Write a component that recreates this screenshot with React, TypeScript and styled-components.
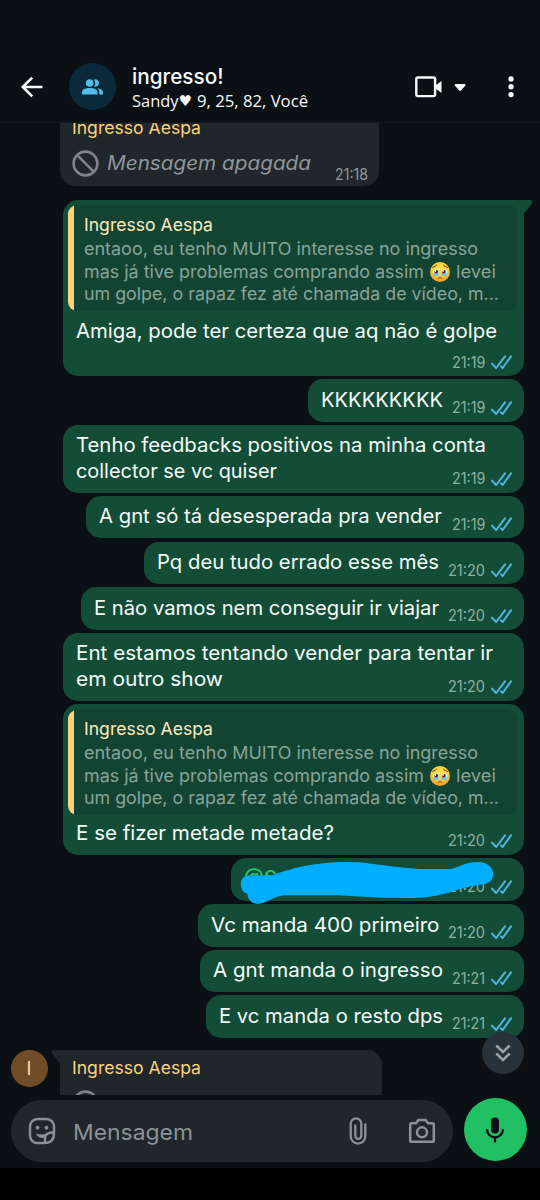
import React, { useLayoutEffect, useRef } from 'react';
import styled, { createGlobalStyle, css } from 'styled-components';

const Global = createGlobalStyle`
  * { box-sizing: border-box; }
  body {
    margin: 0;
    background: #000;
    font-family: Inter, "Open Sans", sans-serif;
    -webkit-font-smoothing: antialiased;
  }
  svg { display: block; flex: none; }
`;

const Screen = styled.div`
  width: 540px;
  height: 1200px;
  display: flex;
  flex-direction: column;
  background: #0b1014;
  overflow: hidden;
`;

const Header = styled.header`
  height: 123px;
  flex: none;
  padding: 51px 26px 0 20px;
  border-bottom: 1px solid #12181c;
  display: flex;
  align-items: center;
`;

const GroupAvatar = styled.div`
  width: 47px;
  height: 47px;
  margin-left: 25px;
  border-radius: 50%;
  background: #0a2a3b;
  display: flex;
  align-items: center;
  justify-content: center;
`;

const Titles = styled.div`
  margin: 1px auto 0 16px;
  color: #f7f8fa;
  white-space: nowrap;
`;

const Title = styled.div`
  font-size: 21px;
  font-weight: 500;
  line-height: 27px;
`;

const Subtitle = styled.div`
  display: flex;
  font-family: "Open Sans", sans-serif;
  font-size: 15.5px;
  line-height: 22px;
`;

const Heart = styled.span`
  font-family: "DejaVu Sans", sans-serif;
  width: 18px;
  font-size: 15px;
`;

const HeaderActions = styled.div`
  display: flex;
  align-items: center;
`;

const Chat = styled.main`
  height: 972px;
  flex: none;
  overflow: hidden;
  padding: 0.3px 16px 0 60px;
  display: flex;
  flex-direction: column;
  align-items: flex-end;
  gap: 3.25px;
  position: relative;
`;

const Bubble = styled.div<{ $w: number; $h: number }>`
  position: relative;
  flex: none;
  width: ${p => p.$w}px;
  height: ${p => p.$h}px;
  border-radius: 15px;
  background: #144d37;
  display: flex;
  flex-direction: column;
`;

const TailBubble = styled(Bubble)`
  margin-top: 10.4px;
  border-top-right-radius: 0;
`;

const Incoming = styled(Bubble)<{ $offset: number }>`
  align-self: flex-start;
  margin-top: ${p => p.$offset}px;
  padding: 6px 11px 0 12px;
  background: #1f272a;
  border-top-left-radius: 0;
`;

const SenderAvatar = styled.div`
  position: absolute;
  left: -49.5px;
  top: 0;
  width: 37px;
  height: 37px;
  border-radius: 50%;
  background: #704d27;
  color: #ffe0a6;
  font-size: 18px;
  display: flex;
  align-items: center;
  justify-content: center;
`;

const Tail = styled.svg<{ $side: 'left' | 'right' }>`
  position: absolute;
  top: 0;
  ${p => (p.$side === 'left' ? css`left: -9px;` : css`right: -9px; transform: scaleX(-1);`)}
`;

const Sender = styled.div`
  font-size: 17.5px;
  line-height: 24px;
  color: #fbd27c;
  white-space: nowrap;
`;

const Deleted = styled.div`
  display: flex;
  align-items: center;
  height: 27px;
  margin-top: 10px;
  color: #8f9699;
  font-size: 20px;
  font-style: italic;
  white-space: nowrap;
  gap: 8px;
`;

const DeletedTime = styled.span`
  margin: 23px 0 0 auto;
  font-size: 15.5px;
  font-style: normal;
`;

const Quote = styled.div`
  flex: none;
  margin: 5.5px 5.7px 0 5px;
  height: 105.5px;
  padding: 8.6px 0 0 16px;
  border-radius: 9px;
  background: linear-gradient(90deg, #fdd279 6px, #134333 6px);
  color: #87a599;
  font-size: 17.8px;
  line-height: 22.6px;
  white-space: nowrap;
`;

const QuoteName = styled.div`
  color: #f9ecb9;
  line-height: 22px;
  margin-bottom: 1.9px;
`;

const QuoteLine = styled.div`
  display: flex;
  align-items: center;
  gap: 6px;
  height: 22.6px;
`;

const Content = styled.div<{ $top?: number }>`
  flex: 1;
  min-height: 0;
  display: flex;
  padding: ${p => p.$top ?? 7.4}px 12px 5.6px 13px;
`;

const Body = styled.div`
  flex: 1;
  min-width: 0;
  color: #f5faf7;
  font-size: 20.3px;
  line-height: 26px;
  white-space: nowrap;
`;

const Mention = styled.span`
  color: #24c45f;
  font-weight: 500;
`;

const Meta = styled.div`
  align-self: flex-end;
  display: flex;
  align-items: center;
  gap: 6px;
  color: #8db1a1;
  font-size: 15.5px;
  line-height: 16px;
`;

const Scribble = styled.svg`
  position: absolute;
  left: 9px;
  top: 3.6px;
`;

const ScrollDown = styled.div`
  position: absolute;
  right: 16px;
  bottom: 21px;
  width: 42px;
  height: 42px;
  border-radius: 50%;
  background: #27323a;
  display: flex;
  align-items: center;
  justify-content: center;
`;

const Composer = styled.footer`
  height: 73px;
  flex: none;
  padding: 5px 13px 6px 11px;
  display: flex;
  align-items: center;
  gap: 11px;
`;

const Field = styled.div`
  flex: 1;
  height: 61.5px;
  border-radius: 31px;
  background: #1f272a;
  color: #8a9295;
  padding: 0 17px;
  display: flex;
  align-items: center;
`;

const Placeholder = styled.div`
  flex: 1;
  margin: 1px 0 0 17px;
  font-size: 22px;
  white-space: nowrap;
`;

const MicButton = styled.div`
  width: 63.5px;
  height: 63.5px;
  border-radius: 50%;
  background: #21c063;
  margin-top: -3px;
  display: flex;
  align-items: center;
  justify-content: center;
`;

const NavBar = styled.div`
  flex: 1;
  background: #000;
`;

const Run = styled.span`
  display: inline-block;
  transform-origin: 0 50%;
`;

/** One line of text, its letters widened so that it spans the given width. */
function Line({ w, children }: { w: number; children: string }) {
  const ref = useRef<HTMLSpanElement>(null);
  useLayoutEffect(() => {
    const el = ref.current!;
    el.style.transform = 'none';
    el.style.width = 'auto';
    const natural = el.getBoundingClientRect().width;
    el.style.width = `${w}px`;
    el.style.transform = `scaleX(${w / natural})`;
  }, [w, children]);
  return <Run ref={ref}>{children}</Run>;
}

const Checks = () => (
  <svg width="21" height="15" viewBox="0 0 21 15" fill="none" stroke="#53b4df" strokeWidth="2" strokeLinecap="round" strokeLinejoin="round">
    <path d="M1 8.6 5.2 13 14 1.4M10 11.4 11.6 13 20 1.4" />
  </svg>
);

const Time = ({ t }: { t: string }) => (
  <Meta>
    <Line w={t === '21:20' ? 37 : t === '21:21' ? 33 : 33.5}>{t}</Line>
    <Checks />
  </Meta>
);

const TailShape = ({ side, color }: { side: 'left' | 'right'; color: string }) => (
  <Tail $side={side} width="10" height="16" viewBox="0 0 10 16">
    <path d="M10 0H2.500C.6 0 0 2 1.200 3.400L9 13.500V16h1z" fill={color} />
  </Tail>
);

const HoldingTears = () => (
  <svg width="20" height="20" viewBox="0 0 20 20">
    <defs>
      <radialGradient id="face" cx=".5" cy=".35" r=".65">
        <stop offset="0" stopColor="#ffe45c" />
        <stop offset=".65" stopColor="#fcc936" />
        <stop offset="1" stopColor="#ec962a" />
      </radialGradient>
    </defs>
    <circle cx="10" cy="10" r="10" fill="url(#face)" />
    <ellipse cx="5.9" cy="10.4" rx="3" ry="3.200" fill="#f4fbff" />
    <ellipse cx="14.1" cy="10.4" rx="3" ry="3.200" fill="#f4fbff" />
    <circle cx="6.200" cy="9.800" r="2" fill="#3d3030" />
    <circle cx="13.800" cy="9.800" r="2" fill="#3d3030" />
    <circle cx="5.400" cy="8.900" r=".9" fill="#fff" />
    <circle cx="13" cy="8.900" r=".9" fill="#fff" />
    <path d="M2.900 10.800q3 1.600 6 0-.2 3.500-3 3.500t-3-3.500M11.100 10.800q3 1.600 6 0-.2 3.500-3 3.500t-3-3.500" fill="#68c3ea" />
    <path d="M2.600 5.400Q4.400 5 6.300 3.500M17.400 5.400Q15.600 5 13.700 3.500M8 16.200q2-1.400 4 0" fill="none" stroke="#6d4425" strokeWidth="1" strokeLinecap="round" />
  </svg>
);

const Banned = () => (
  <svg width="27" height="27" viewBox="0 0 27 27" fill="none" stroke="#7e8588" strokeWidth="2.600">
    <circle cx="13.500" cy="13.500" r="11.900" />
    <path d="m5.200 5.200 16.600 16.600" />
  </svg>
);

const QuotedMessage = () => (
  <Quote>
    <QuoteName><Line w={129}>Ingresso Aespa</Line></QuoteName>
    <QuoteLine><Line w={394}>entaoo, eu tenho MUITO interesse no ingresso</Line></QuoteLine>
    <QuoteLine>
      <Line w={340}>mas já tive problemas comprando assim</Line>
      <HoldingTears />
      <Line w={40}>levei</Line>
    </QuoteLine>
    <QuoteLine><Line w={415}>um golpe, o rapaz fez até chamada de vídeo, m...</Line></QuoteLine>
  </Quote>
);

type MessageProps = { w: number; h?: number; top?: number; time: string; lines: [string, number][] };

const MessageContent = ({ time, lines, top }: Pick<MessageProps, 'time' | 'lines' | 'top'>) => (
  <Content $top={top}>
    <Body>
      {lines.map(([text, width]) => <div key={text}><Line w={width}>{text}</Line></div>)}
    </Body>
    <Time t={time} />
  </Content>
);

const Message = ({ w, h = 42.4, time, lines }: MessageProps) => (
  <Bubble $w={w} $h={h}><MessageContent time={time} lines={lines} /></Bubble>
);

export default function App() {
  return (
    <Screen>
      <Global />
      <Header>
        <svg width="24" height="24" viewBox="0 0 24 24" fill="none" stroke="#f7f8fa" strokeWidth="2.600" strokeLinejoin="miter">
          <path d="M12.200 2.600 2.800 12l9.400 9.400M3 12h19.400" />
        </svg>
        <GroupAvatar>
          <svg width="21" height="16" viewBox="0 0 21 16" fill="#53bdeb">
            <circle cx="7.700" cy="4" r="3.800" />
            <path d="M0 15.500v-2.400C0 10.400 3.500 9 7.700 9s7.700 1.400 7.700 4.100v2.400z" />
            <path d="M12 .4a3.800 3.800 0 1 1 0 7.200c1.600-2 1.600-5.200 0-7.200M15.300 9.200c3.500.5 5.700 1.900 5.700 4v2.300h-3.700v-2.400c0-1.600-.7-2.900-2-3.900" />
          </svg>
        </GroupAvatar>
        <Titles>
          <Title><Line w={91.500}>ingresso!</Line></Title>
          <Subtitle>
            <Line w={46.500}>Sandy</Line><Heart>♥</Heart><Line w={111}>9, 25, 82, Você</Line>
          </Subtitle>
        </Titles>
        <HeaderActions>
          <svg width="51" height="22" viewBox="0 0 51 22" fill="#f7f8fa">
            <rect x="1.300" y="1.500" width="18.800" height="18.600" rx="1.600" fill="none" stroke="#f7f8fa" strokeWidth="2.400" />
            <path d="M20.500 9.500 26.500 5v12l-6-4.500zM40.500 8h9.200q1.400.6.5 1.800L46 14.600q-.9.800-1.800 0L40 9.800Q39 8.600 40.500 8" />
          </svg>
          <svg width="6" height="22" viewBox="0 0 6 22" fill="#f7f8fa" style={{ marginLeft: 42 }}>
            <circle cx="3" cy="3" r="2.700" /><circle cx="3" cy="10.800" r="2.700" /><circle cx="3" cy="18.600" r="2.700" />
          </svg>
        </HeaderActions>
      </Header>

      <Chat>
        <Incoming $w={319} $h={76.500} $offset={-13.500}>
          <Sender><Line w={129}>Ingresso Aespa</Line></Sender>
          <Deleted>
            <Banned /><Line w={204}>Mensagem apagada</Line>
            <DeletedTime><Line w={33}>21:18</Line></DeletedTime>
          </Deleted>
        </Incoming>

        <TailBubble $w={461} $h={176.200}>
          <TailShape side="right" color="#144d37" />
          <QuotedMessage />
          <MessageContent time="21:19" lines={[['Amiga, pode ter certeza que aq não é golpe', 421]]} />
        </TailBubble>
        <Message w={216.500} time="21:19" lines={[['KKKKKKKKK', 122]]} />
        <Message w={461} h={67.800} time="21:19" lines={[['Tenho feedbacks positivos na minha conta', 410], ['collector se vc quiser', 201]]} />
        <Message w={438} time="21:19" lines={[['A gnt só tá desesperada pra vender', 343]]} />
        <Message w={380.500} time="21:20" lines={[['Pq deu tudo errado esse mês', 282]]} />
        <Message w={443.500} time="21:20" lines={[['E não vamos nem conseguir ir viajar', 345]]} />
        <Message w={461} h={67.800} time="21:20" lines={[['Ent estamos tentando vender para tentar ir', 417], ['em outro show', 147]]} />
        <Bubble $w={461} $h={150.600}>
          <QuotedMessage />
          <MessageContent top={4.800} time="21:20" lines={[['E se fizer metade metade?', 258]]} />
        </Bubble>
        <Bubble $w={293} $h={43}>
          <Content>
            <Body><Mention><Line w={33}>@S</Line></Mention></Body>
            <Time t="21:20" />
          </Content>
          <Scribble width="254" height="44" viewBox="240 861 254 44">
            <path fill="#00aeff" d="M241 886C240 880 243 876 249 875.500L273 875C288 870 304 864 337 862.300Q350 861.700 360 862.300L387 865.700Q405 868 420 869H450C458 868 464 862.300 478 862C487 862 493 867 493.300 874C493 880 489 883.500 483 884.500C467 885.500 454 892 437 895.500Q425 898 412 898L383 897.700L337 895.300H287C276 895 270 901 261 903.500C252 905 248 900 247.500 894C243 892 241.500 890 241 886Z" />
          </Scribble>
        </Bubble>
        <Message w={326.500} time="21:20" lines={[['Vc manda 400 primeiro', 228.500]]} />
        <Message w={324} time="21:21" lines={[['A gnt manda o ingresso', 230]]} />
        <Message w={318} time="21:21" lines={[['E vc manda o resto dps', 224]]} />

        <Incoming $w={322} $h={76.500} $offset={9.400}>
          <TailShape side="left" color="#1f272a" />
          <SenderAvatar>I</SenderAvatar>
          <Sender><Line w={129}>Ingresso Aespa</Line></Sender>
          <Deleted><Banned /><Line w={204}>Mensagem apagada</Line></Deleted>
        </Incoming>

        <ScrollDown>
          <svg width="16" height="18" viewBox="0 0 16 18" fill="none" stroke="#98a0a5" strokeWidth="2.500">
            <path d="m1.300 1.500 6.700 6.500 6.700-6.500M1.300 9.500 8 16l6.700-6.500" />
          </svg>
        </ScrollDown>
      </Chat>

      <Composer>
        <Field>
          <svg width="28" height="28" viewBox="0 0 28 28" fill="none" stroke="#8a9295" strokeWidth="2.400" strokeLinejoin="round">
            <path d="M9.500 2h9A7.500 7.500 0 0 1 26 9.500V16q0 10-9.500 10h-7A7.500 7.500 0 0 1 2 18.500v-9A7.500 7.500 0 0 1 9.500 2Z" />
            <path d="M26 15.500c-5.500-.3-9 1.500-9 6V26" />
            <circle cx="9.500" cy="10.700" r="1.900" fill="#8a9295" stroke="none" />
            <circle cx="18.500" cy="10.700" r="1.900" fill="#8a9295" stroke="none" />
            <path d="M8 16.500c2.500 1 6.500 1.200 10 .4l-2 4c-4 .6-7-1.400-8-4.400" fill="#8a9295" stroke="none" />
          </svg>
          <Placeholder><Line w={120}>Mensagem</Line></Placeholder>
          <svg width="18" height="28" viewBox="0 0 18 28" fill="none" stroke="#8a9295" strokeWidth="2.300">
            <path d="M16.300 6.500v12.800a7.300 7.300 0 0 1-14.600 0V6.700a5.300 5.300 0 0 1 10.600 0v12.100a3 3 0 0 1-6 0V7.500" />
          </svg>
          <svg width="28" height="26" viewBox="0 0 28 26" fill="none" stroke="#8a9295" strokeWidth="2.500" strokeLinejoin="round" style={{ marginLeft: 41 }}>
            <path d="M3.500 5.200H8L10.400 2h7.200L20 5.200h4.500q1.300 0 1.300 1.300v16q0 1.300-1.300 1.300h-21q-1.300 0-1.300-1.300v-16q0-1.300 1.300-1.300Z" />
            <circle cx="14" cy="14.300" r="5" />
          </svg>
        </Field>
        <MicButton>
          <svg width="20" height="26" viewBox="0 0 20 26" fill="none" stroke="#0b1014" strokeWidth="2.300">
            <rect x="6" y=".5" width="8" height="16" rx="4" fill="#0b1014" stroke="none" />
            <path d="M2 12.300a8 8 0 0 0 16 0M10 20v5.500" />
          </svg>
        </MicButton>
      </Composer>
      <NavBar />
    </Screen>
  );
}
